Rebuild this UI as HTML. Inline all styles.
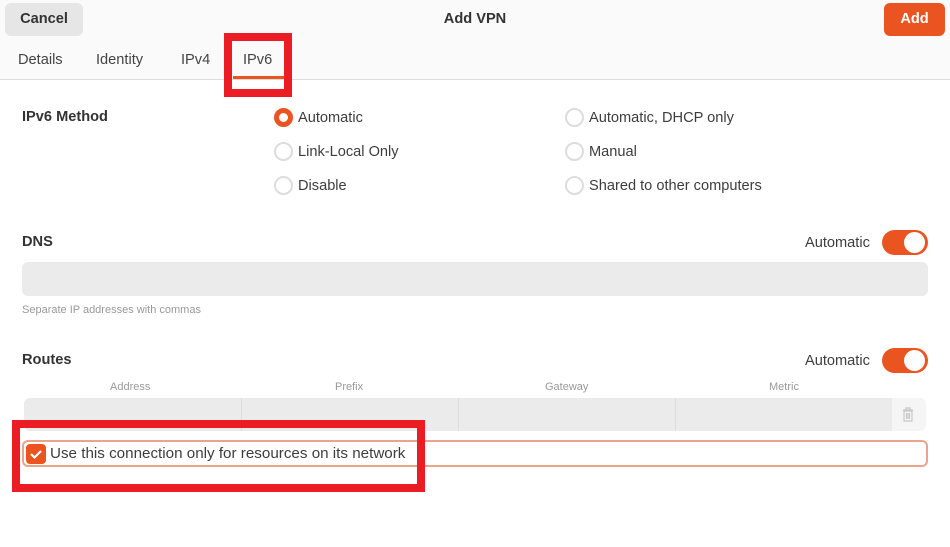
<!DOCTYPE html>
<html><head><style>
*{box-sizing:border-box;margin:0;padding:0}
body{width:950px;height:547px;background:#fff;font-family:"Liberation Sans",sans-serif;color:#333;position:relative;overflow:hidden;font-size:14.6px}
.a{position:absolute}
.hdr{left:0;top:0;width:950px;height:80px;background:#fafafa;border-bottom:1px solid #dcdcdc}
.btn{border-radius:6px;font-weight:bold;font-size:14.6px;text-align:center;line-height:32px}
.tab{top:52px;font-size:14.6px;color:#444}
.rad{width:19px;height:19px;border-radius:50%;border:2px solid #ddd;background:#fff}
.rad.on{border:5px solid #e95420}
.lbl{font-size:14.6px;color:#3d3d3d}
.b{font-weight:bold;font-size:14.6px;color:#333}
.tog{width:46px;height:25px;border-radius:13px;background:#e95420}
.tog:after{content:"";position:absolute;right:3px;top:2px;width:21px;height:21px;border-radius:50%;background:#fff}
.red{border:8px solid #ec1c24}
.sm{font-size:11px;color:#999}
</style></head><body>
<div class="a hdr"></div>
<div class="a btn" style="left:5px;top:3px;width:78px;height:33px;background:#e6e6e6;color:#333">Cancel</div>
<div class="a" style="left:0;width:950px;top:11px;text-align:center;font-weight:bold;font-size:14.6px">Add VPN</div>
<div class="a btn" style="left:884px;top:3px;width:61px;height:33px;background:#e95420;color:#fff">Add</div>
<div class="a tab" style="left:18px">Details</div>
<div class="a tab" style="left:96px">Identity</div>
<div class="a tab" style="left:181px">IPv4</div>
<div class="a tab" style="left:243px">IPv6</div>
<div class="a" style="left:233px;top:76px;width:51px;height:3px;background:#e95420"></div>
<div class="a red" style="left:224px;top:33px;width:68px;height:64px"></div>

<div class="a b" style="left:22px;top:109px">IPv6 Method</div>
<div class="a rad on" style="left:274px;top:108px"></div><div class="a lbl" style="left:298px;top:110px">Automatic</div>
<div class="a rad" style="left:274px;top:142px"></div><div class="a lbl" style="left:298px;top:144px">Link-Local Only</div>
<div class="a rad" style="left:274px;top:176px"></div><div class="a lbl" style="left:298px;top:178px">Disable</div>
<div class="a rad" style="left:565px;top:108px"></div><div class="a lbl" style="left:589px;top:110px">Automatic, DHCP only</div>
<div class="a rad" style="left:565px;top:142px"></div><div class="a lbl" style="left:589px;top:144px">Manual</div>
<div class="a rad" style="left:565px;top:176px"></div><div class="a lbl" style="left:589px;top:178px">Shared to other computers</div>

<div class="a b" style="left:22px;top:234px">DNS</div>
<div class="a lbl" style="left:805px;top:235px">Automatic</div>
<div class="a tog" style="left:882px;top:230px"></div>
<div class="a" style="left:22px;top:262px;width:906px;height:34px;background:#ebebeb;border-radius:6px"></div>
<div class="a sm" style="left:22px;top:304px">Separate IP addresses with commas</div>

<div class="a b" style="left:22px;top:352px">Routes</div>
<div class="a lbl" style="left:805px;top:353px">Automatic</div>
<div class="a tog" style="left:882px;top:348px"></div>
<div class="a sm" style="left:110px;top:381px">Address</div>
<div class="a sm" style="left:335px;top:381px">Prefix</div>
<div class="a sm" style="left:545px;top:381px">Gateway</div>
<div class="a sm" style="left:769px;top:381px">Metric</div>
<div class="a" style="left:24px;top:398px;width:902px;height:33px;background:#f5f5f5;border-radius:6px;overflow:hidden">
 <div class="a" style="left:0;top:0;width:868px;height:33px;background:#ebebeb"></div>
 <div class="a" style="left:217px;top:0;width:1px;height:33px;background:#ddd"></div>
 <div class="a" style="left:434px;top:0;width:1px;height:33px;background:#ddd"></div>
 <div class="a" style="left:651px;top:0;width:1px;height:33px;background:#ddd"></div>
 <svg class="a" style="left:878px;top:9px" width="12" height="15" viewBox="0 0 12 15"><path d="M1 3h10M4 3V1h4v2M2 4h8v10H2zM4.5 6v6M6 6v6M7.5 6v6" stroke="#c8c8c8" fill="none" stroke-width="1.2"/></svg>
</div>
<div class="a" style="left:22px;top:440px;width:906px;height:27px;border:2px solid #eba48b;border-radius:6px"></div>
<div class="a" style="left:26px;top:444px;width:20px;height:20px;background:#e95420;border-radius:4px"><svg width="20" height="20"><path d="M5 10l3.5 3.5L15 7" stroke="#fff" stroke-width="2.2" fill="none"/></svg></div>
<div class="a lbl" style="left:50px;top:445px;font-size:15.2px">Use this connection only for resources on its network</div>
<div class="a red" style="left:12px;top:420px;width:413px;height:72px"></div>
</body></html>
